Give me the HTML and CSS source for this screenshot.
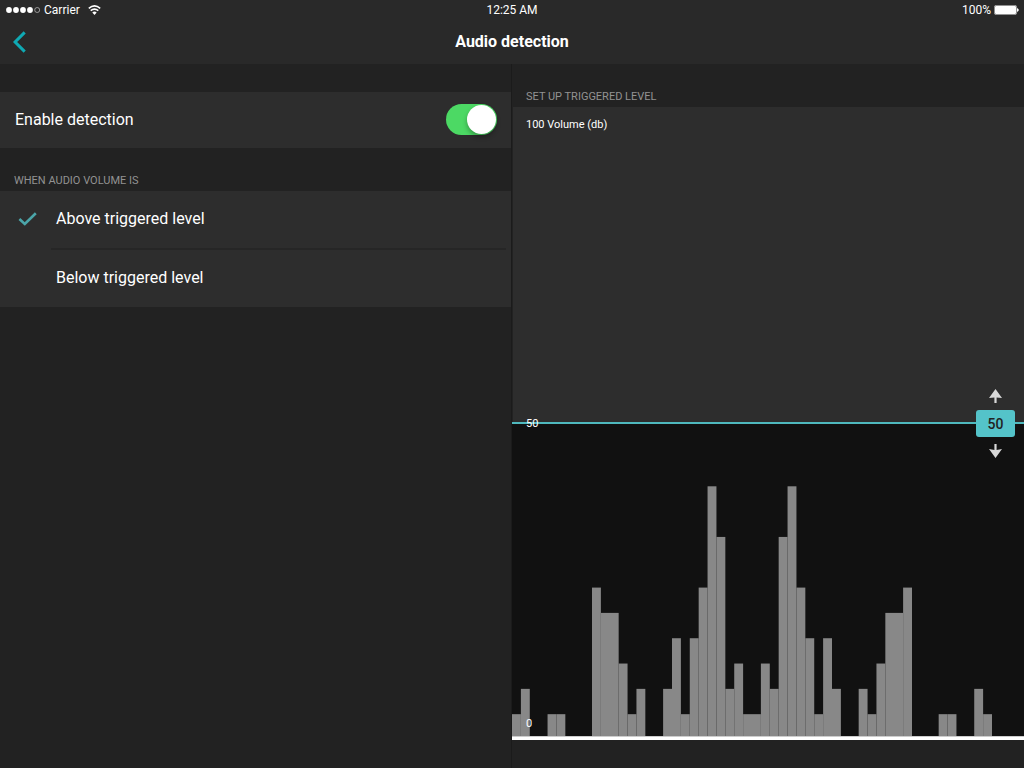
FILE: index.html
```html
<!DOCTYPE html>
<html lang="en">
<head>
<meta charset="utf-8">
<meta name="viewport" content="width=device-width, initial-scale=1">
<title>Audio detection</title>
<link rel="stylesheet" href="styles.css">
</head>
<body>
<header class="header">
  <div class="status">
    <div class="status-side">
      <svg class="signal" width="35" height="8" viewBox="0 0 35 8" aria-hidden="true">
        <g fill="#fff"><circle cx="3" cy="4" r="2.9"/><circle cx="10" cy="4" r="2.9"/><circle cx="17" cy="4" r="2.9"/><circle cx="24" cy="4" r="2.9"/></g>
        <circle cx="31.2" cy="4" r="2.5" fill="none" stroke="#ddd" stroke-width=".6"/>
      </svg>
      <span class="carrier">Carrier</span>
      <svg width="13" height="10" viewBox="0 0 13 10" aria-hidden="true">
        <path d="M.8 3.4Q6.5-1.5 12.2 3.4M2.7 5.7Q6.5 2.4 10.3 5.7" fill="none" stroke="#fff" stroke-width="1.6"/>
        <path d="M4.3 7.5Q6.5 5.6 8.7 7.5L6.5 9.9Z" fill="#fff"/>
      </svg>
    </div>
    <time>12:25 AM</time>
    <div class="status-side status-end">
      <span>100%</span>
      <svg width="25" height="10" viewBox="0 0 25 10" aria-hidden="true">
        <rect x=".4" y=".4" width="22.2" height="9.2" rx="1.6" fill="none" stroke="#bbb" stroke-width=".8"/>
        <rect x="1" y="1" width="21" height="8" rx="1" fill="#fff"/>
        <path d="M23 3Q26.6 5 23 7Z" fill="#fff"/>
      </svg>
    </div>
  </div>
  <nav class="nav">
    <button class="back" type="button" aria-label="Back">
      <svg width="14" height="22" viewBox="0 0 14 22"><path d="M12.7 1.4 3.1 11l9.6 9.6" fill="none" stroke="#0fa9b3" stroke-width="3"/></svg>
    </button>
    <h1 class="title">Audio detection</h1>
  </nav>
</header>
<main class="columns">
  <section class="settings">
    <div class="row">
      <label for="enable">Enable detection</label>
      <input class="switch" id="enable" type="checkbox" role="switch" checked>
    </div>
    <fieldset class="group">
      <legend class="heading">WHEN AUDIO VOLUME IS</legend>
      <div class="options">
        <label class="option">
          <input class="radio" type="radio" name="when" checked>
          <svg class="check" width="19" height="14" viewBox="0 0 19 14" aria-hidden="true"><path d="M1.4 7 6.8 12 17.8 1.2" fill="none" stroke="#4ba5a9" stroke-width="2.6"/></svg>
          <span class="option-text">Above triggered level</span>
        </label>
        <label class="option">
          <input class="radio" type="radio" name="when">
          <svg class="check" width="19" height="14" viewBox="0 0 19 14" aria-hidden="true"><path d="M1.4 7 6.8 12 17.8 1.2" fill="none" stroke="#4ba5a9" stroke-width="2.6"/></svg>
          <span class="option-text">Below triggered level</span>
        </label>
      </div>
    </fieldset>
  </section>
  <section class="level">
    <h2 class="heading">SET UP TRIGGERED LEVEL</h2>
    <div class="chart">
      <div class="above"><span class="label">100 Volume (db)</span></div>
      <div class="below">
        <svg class="bars" viewBox="0 0 57.6 12.5" preserveAspectRatio="none" role="img" aria-label="Recorded volume">
          <rect x="0" y="11.5" width="1" height="1"/><rect x="1" y="10.5" width="1" height="2"/>
          <rect x="4" y="11.5" width="1" height="1"/><rect x="5" y="11.5" width="1" height="1"/>
          <rect x="9" y="6.5" width="1" height="6"/><rect x="10" y="7.5" width="2" height="5"/>
          <rect x="12" y="9.5" width="1" height="3"/><rect x="13" y="11.5" width="1" height="1"/>
          <rect x="14" y="10.5" width="1" height="2"/><rect x="17" y="10.5" width="1" height="2"/>
          <rect x="18" y="8.5" width="1" height="4"/><rect x="19" y="11.5" width="1" height="1"/>
          <rect x="20" y="8.5" width="1" height="4"/><rect x="21" y="6.5" width="1" height="6"/>
          <rect x="22" y="2.5" width="1" height="10"/><rect x="23" y="4.5" width="1" height="8"/>
          <rect x="24" y="10.5" width="1" height="2"/><rect x="25" y="9.5" width="1" height="3"/>
          <rect x="26" y="11.5" width="2" height="1"/><rect x="28" y="9.5" width="1" height="3"/>
          <rect x="29" y="10.5" width="1" height="2"/><rect x="30" y="4.5" width="1" height="8"/>
          <rect x="31" y="2.5" width="1" height="10"/><rect x="32" y="6.5" width="1" height="6"/>
          <rect x="33" y="8.5" width="1" height="4"/><rect x="34" y="11.5" width="1" height="1"/>
          <rect x="35" y="8.5" width="1" height="4"/><rect x="36" y="10.5" width="1" height="2"/>
          <rect x="39" y="10.5" width="1" height="2"/><rect x="40" y="11.5" width="1" height="1"/>
          <rect x="41" y="9.5" width="1" height="3"/><rect x="42" y="7.5" width="2" height="5"/>
          <rect x="44" y="6.5" width="1" height="6"/><rect x="48" y="11.5" width="1" height="1"/>
          <rect x="49" y="11.5" width="1" height="1"/><rect x="52" y="10.5" width="1" height="2"/>
          <rect x="53" y="11.5" width="1" height="1"/>
        </svg>
        <span class="label label-zero">0</span>
      </div>
      <div class="threshold">
        <span class="label">50</span>
        <div class="stepper">
          <button class="step" type="button" aria-label="Raise level">
            <svg width="13" height="14" viewBox="0 0 13 14"><path d="M6.5 0 13 9 7.6 8.5V14H5.4V8.5L0 9Z" fill="#d8d8d8"/></svg>
          </button>
          <output class="value">50</output>
          <button class="step" type="button" aria-label="Lower level">
            <svg width="13" height="14" viewBox="0 0 13 14"><path d="M6.5 14 0 5l5.4 1V0h2.2v6L13 5Z" fill="#d8d8d8"/></svg>
          </button>
        </div>
      </div>
    </div>
  </section>
</main>
</body>
</html>
```
FILE: styles.css
```css
* { box-sizing: border-box; }
body {
  margin: 0;
  min-height: 100vh;
  display: flex;
  flex-direction: column;
  background: #222;
  color: #fff;
  font-family: Roboto, "Liberation Sans", sans-serif;
  font-size: 16px;
}
button { padding: 0; border: 0; background: none; cursor: pointer; }
svg { display: block; }

.header { background: #292929; }
.status {
  display: grid;
  grid-template-columns: 1fr auto 1fr;
  align-items: center;
  height: 20px;
  padding: 0 6px;
  font-size: 12px;
}
.status-side { display: flex; align-items: center; gap: 3px; }
.status-end { justify-content: flex-end; margin-right: -1px; }
.carrier { margin-right: 5px; }
.nav {
  display: grid;
  grid-template-columns: 1fr auto 1fr;
  align-items: center;
  height: 44px;
  padding: 0 12px 1px;
}
.back { justify-self: start; }
.title { margin: 0; font-size: 16px; font-weight: 700; }

.columns { flex: 1; display: grid; grid-template-columns: 1fr 1fr; }
.settings { padding-top: 28px; border-right: 1px solid #1b1b1b; }
.row {
  display: flex;
  align-items: center;
  justify-content: space-between;
  height: 56px;
  padding: 0 14px 1px 15px;
  background: #2d2d2d;
}
.switch {
  appearance: none;
  width: 51px;
  height: 31px;
  margin: 0;
  padding: 1px;
  display: flex;
  justify-content: flex-end;
  border-radius: 16px;
  background: #4cd964;
}
.switch::before {
  content: "";
  width: 29px;
  height: 29px;
  border-radius: 50%;
  background: #fff;
  box-shadow: 0 3px 5px rgba(0, 0, 0, .3);
}
.switch:not(:checked) { justify-content: flex-start; background: #555; }
.group { margin: 0; padding: 0; border: 0; min-width: 0; }
.heading {
  margin: 0;
  height: 43px;
  padding: 22px 14px 0;
  color: #929292;
  font-size: 11px;
  font-weight: 400;
  line-height: 21px;
}
.options { background: #2d2d2d; }
.option { display: flex; align-items: center; height: 59px; padding: 0 5px 0 18px; }
.option:last-child { height: 57px; }
.radio { appearance: none; width: 0; margin: 0; }
.check { visibility: hidden; margin: 0 14px 4px 0; }
.radio:checked + .check { visibility: visible; }
.option-text { flex: 1; padding: 0 0 2px 5px; line-height: 55px; }
.option:first-child .option-text { border-bottom: 2px solid #262626; }

.level { display: flex; flex-direction: column; padding-bottom: 28px; }
.chart {
  flex: 1;
  position: relative;
  display: grid;
  grid-template-rows: 1fr 1fr;
}
.chart::after {
  content: "";
  position: absolute;
  left: 0;
  right: 0;
  bottom: 0;
  height: 3px;
  background: #fff;
  border-top: 1px solid #ccc;
}
.above { display: flex; padding: 10px 13px; background: #2d2d2d; border-left: 1px solid #222; }
.below { position: relative; background: #111; }
.bars { position: absolute; left: 0; bottom: 1px; width: 100%; height: 100%; fill: #888; }
.label { font-size: 11px; line-height: 16px; }
.label-zero { position: absolute; left: 14px; bottom: 8px; }
.threshold {
  position: absolute;
  inset: 0;
  display: flex;
  align-items: center;
  justify-content: space-between;
  padding: 0 9px 0 14px;
}
.threshold::before {
  content: "";
  position: absolute;
  left: 0;
  right: 0;
  top: calc(50% - 2px);
  height: 2px;
  background: #4fb9be;
}
.threshold .label { position: relative; }
.stepper { position: relative; display: flex; flex-direction: column; align-items: center; gap: 7px; }
.value {
  width: 39px;
  padding-top: 1px;
  border-radius: 3px;
  background: #54c3c9;
  color: #222;
  font-size: 14px;
  font-weight: 500;
  line-height: 26px;
  text-align: center;
}
```
